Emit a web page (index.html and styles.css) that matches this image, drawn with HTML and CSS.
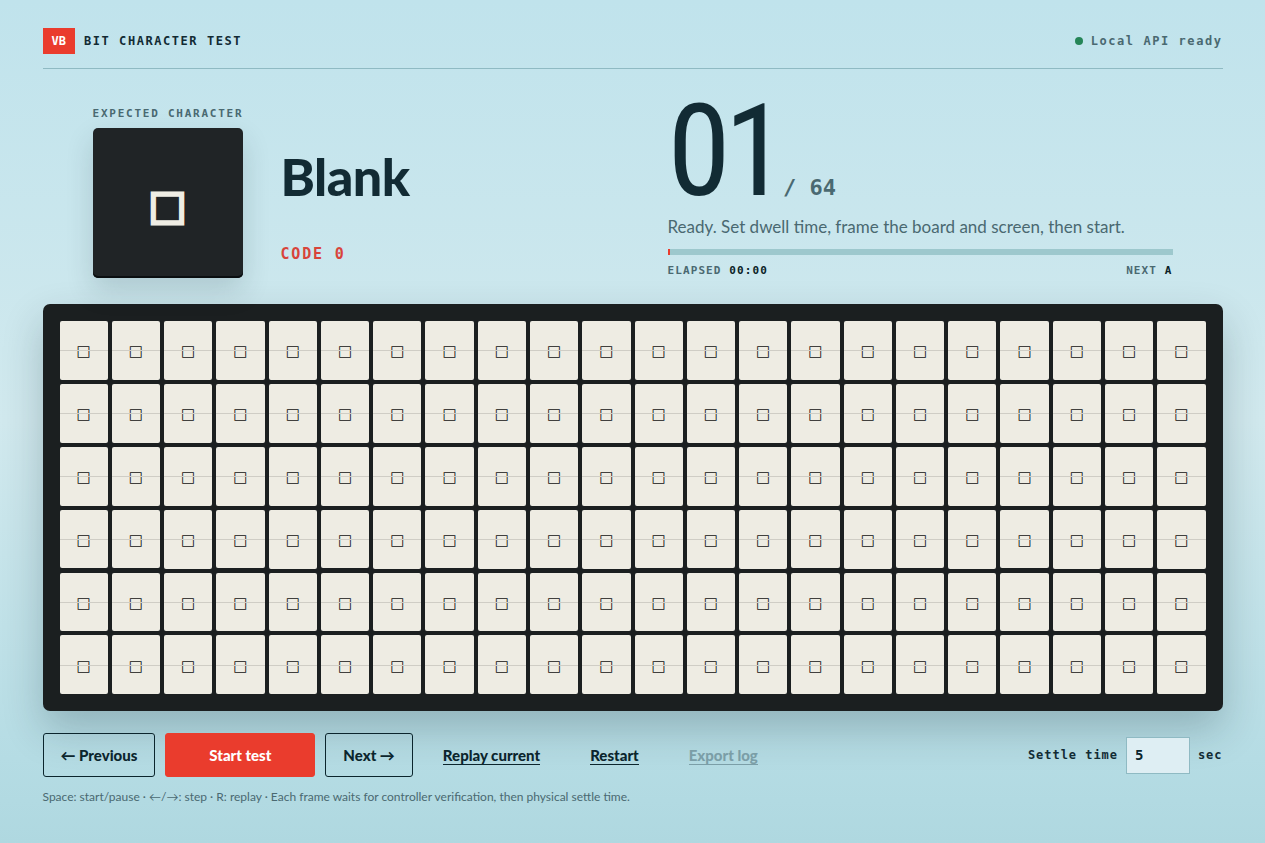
FILE: index.html
```html
<!DOCTYPE html>
<html lang="en">
<head>
<meta charset="utf-8">
<meta name="viewport" content="width=device-width, initial-scale=1">
<title>Bit character test</title>
<link rel="stylesheet" href="styles.css">
</head>
<body>
<div class="page">
  <header class="topbar">
    <div class="brand"><span class="badge">VB</span><span class="brand-name">BIT CHARACTER TEST</span></div>
    <div class="status"><span class="dot"></span>Local API ready</div>
  </header>
  <main>
    <section class="hero">
      <div class="expected">
        <div class="sample">
          <p class="label">EXPECTED CHARACTER</p>
          <div class="tile"><span class="tile-glyph">□</span></div>
        </div>
        <div class="identity">
          <h1 class="name">Blank</h1>
          <p class="code">CODE 0</p>
        </div>
      </div>
      <div class="progress">
        <div class="counter"><span class="current">01</span><span class="total">/ 64</span></div>
        <p class="message">Ready. Set dwell time, frame the board and screen, then start.</p>
        <div class="track"><div class="fill"></div></div>
        <div class="meta"><span>ELAPSED <strong>00:00</strong></span><span>NEXT <strong>A</strong></span></div>
      </div>
    </section>
    <section class="board" id="board" aria-label="Board"></section>
    <div class="controls">
      <button class="button" type="button">← Previous</button>
      <button class="button primary" type="button">Start test</button>
      <button class="button" type="button">Next →</button>
      <button class="link" type="button"><span>Replay current</span></button>
      <button class="link" type="button"><span>Restart</span></button>
      <button class="link" type="button" disabled><span>Export log</span></button>
      <div class="settle">
        <label for="settle">Settle time</label>
        <input id="settle" type="text" inputmode="numeric" value="5">
        <span>sec</span>
      </div>
    </div>
    <p class="hint">Space: start/pause · ←/→: step · R: replay · Each frame waits for controller verification, then physical settle time.</p>
  </main>
</div>
<script src="board.js"></script>
</body>
</html>
```
FILE: board.js
```js
const board = document.getElementById("board");
for (let i = 0; i < 6 * 22; i++) {
  const cell = document.createElement("div");
  cell.className = "cell";
  cell.textContent = "□";
  board.append(cell);
}
```
FILE: styles.css
```css
:root {
  --ink: #122b34;
  --muted: #4a6971;
  --red: #ea3c2d;
  --line: #8fbac3;
  --sans: Lato, "Liberation Sans", sans-serif;
  --mono: "DejaVu Sans Mono", "Liberation Mono", monospace;
}
* { box-sizing: border-box; }
body {
  margin: 0;
  min-height: 100vh;
  color: var(--ink);
  font-family: var(--sans);
  background: linear-gradient(180deg, #c0e3ec 0%, #d1e9ee 50%, #b5dce4 90%, #afd8e0 100%);
}
p, h1 { margin: 0; }
.page {
  width: min(1180px, 100% - 48px);
  margin: 0 auto;
  padding: 28px 0 24px;
}
.topbar {
  display: flex;
  justify-content: space-between;
  align-items: center;
  padding-bottom: 14px;
  border-bottom: 1px solid var(--line);
}
.brand, .status {
  display: flex;
  align-items: center;
  font: bold 12px/26px var(--mono);
}
.brand { gap: 9px; letter-spacing: 0.13em; }
.badge {
  padding: 0 9px;
  background: var(--red);
  color: #fff;
  letter-spacing: 0;
}
.status { gap: 8px; color: var(--muted); letter-spacing: 0.13em; }
.dot {
  width: 8px;
  height: 8px;
  border-radius: 50%;
  background: #258557;
}
.hero {
  display: grid;
  grid-template-columns: 1fr 1fr;
  gap: 70px;
  align-items: end;
  padding: 26px 50px 26px;
}
.expected { display: flex; gap: 38px; align-items: flex-end; }
.label {
  margin-bottom: 7px;
  font: bold 11px/14px var(--mono);
  letter-spacing: 0.16em;
  color: var(--muted);
  white-space: nowrap;
}
.sample { width: 150px; }
.tile {
  display: grid;
  place-items: center;
  height: 150px;
  border-radius: 5px;
  background: #202426;
  box-shadow: inset 0 -2px 0 #0a0e10, 0 12px 28px rgba(18, 43, 52, 0.16);
}
.tile-glyph {
  padding-top: 4px;
  font: bold 40px/60px "DejaVu Sans", sans-serif;
  color: #efede4;
  -webkit-text-stroke: 3px #efede4;
}
.identity {
  display: flex;
  flex-direction: column;
  gap: 40px;
  padding-bottom: 14px;
}
.name {
  font-size: 52px;
  line-height: 56px;
  font-weight: 900;
  letter-spacing: -0.01em;
}
.code {
  font: bold 15px/20px var(--mono);
  letter-spacing: 0.12em;
  color: #d8443b;
}
.counter { display: flex; align-items: baseline; gap: 2px; }
.current {
  font: 128px/112px "Liberation Sans Narrow", "Arial Narrow", "Roboto Condensed", "Open Sans Condensed", "Liberation Sans", sans-serif;
  letter-spacing: -0.05em;
}
.total { font: bold 22px/28px var(--mono); color: var(--muted); }
.message {
  margin-top: 8px;
  font-size: 17px;
  line-height: 24px;
  color: var(--muted);
}
.track { height: 6px; margin: 10px 0 9px; background: #9dc8cd; }
.fill { width: 2px; height: 6px; background: var(--red); }
.meta {
  display: flex;
  justify-content: space-between;
  font: bold 11px/14px var(--mono);
  letter-spacing: 0.1em;
  color: var(--muted);
}
.meta strong { color: #0b1f27; }
.board {
  display: grid;
  grid-template-columns: repeat(22, 1fr);
  gap: 4px;
  padding: 17px;
  border-radius: 7px;
  background: #1b1f20;
  box-shadow: 0 18px 40px rgba(18, 43, 52, 0.24);
}
.cell {
  position: relative;
  display: grid;
  place-items: center;
  aspect-ratio: 0.82;
  padding-top: 2px;
  border-radius: 2px;
  background: #eeece3;
  color: #111;
  font: 15px/20px "DejaVu Sans", sans-serif;
}
.cell::after {
  content: "";
  position: absolute;
  inset: 50% 0 auto;
  height: 1px;
  background: #cfcdc5;
}
.controls {
  display: flex;
  align-items: center;
  gap: 10px;
  margin-top: 22px;
}
.button, .link {
  font: 900 15px/20px var(--sans);
  color: #0b252d;
  white-space: nowrap;
}
.button {
  height: 44px;
  padding: 0 17px;
  border: 1px solid #0b252d;
  border-radius: 3px;
  background: transparent;
}
.primary {
  width: 150px;
  border-color: var(--red);
  background: var(--red);
  color: #fff;
}
.link {
  padding: 0 20px;
  border: 0;
  background: transparent;
}
.link span { display: block; border-bottom: 1px solid currentColor; line-height: 18px; }
.link:disabled { color: #7b9ea7; }
.settle {
  display: flex;
  align-items: center;
  gap: 8px;
  margin-left: auto;
  font: bold 12px/20px var(--mono);
  letter-spacing: 0.08em;
}
.settle input {
  width: 64px;
  height: 37px;
  padding: 0 8px;
  border: 1px solid var(--line);
  background: #deeef3;
  color: #0b252d;
  font: bold 14px/20px var(--mono);
}
.hint {
  margin-top: 11px;
  font-size: 12px;
  line-height: 18px;
  color: var(--muted);
}
```
